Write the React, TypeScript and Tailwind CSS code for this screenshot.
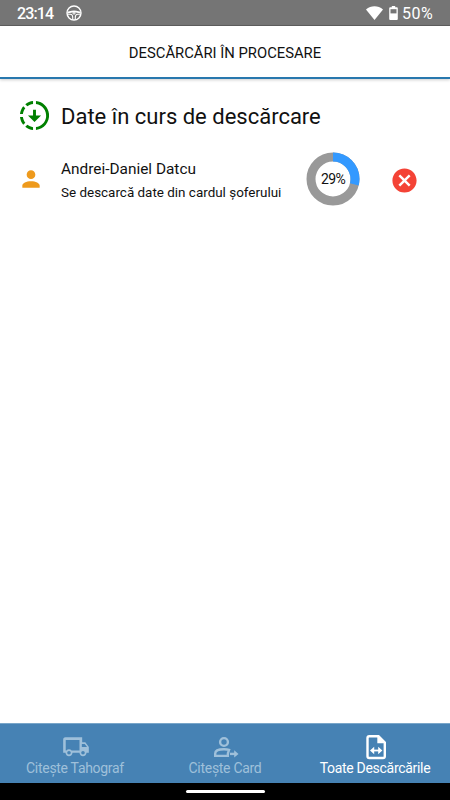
import type { ReactNode } from 'react';
import clsx from 'clsx';

function StatusBar() {
  return (
    <div className="flex h-[26px] shrink-0 items-center border-b border-[#5f5f5f] bg-[#757575] pr-[17px] pl-[17px] text-white">
      <span className="w-[49px] pt-[2px] font-['Roboto'] text-[16px] leading-none font-medium tracking-[-0.9px]">
        23:14
      </span>
      <svg width="16" height="16" viewBox="0 0 16 16" fill="none" stroke="currentColor">
        <circle cx="8" cy="8" r="7" strokeWidth="1.4" />
        <path d="M1.5 7.6C3.5 7.300 5 6.300 8 6.300S12.500 7.300 14.500 7.600" strokeWidth="1.8" />
        <circle cx="8" cy="8" r="1.500" fill="currentColor" stroke="none" />
        <path d="M1.600 9.300H4.300Q6.600 9.500 6.700 12V14.500M14.400 9.300H11.700Q9.400 9.500 9.300 12V14.500" strokeWidth="1.1" />
        <circle cx="8" cy="8" r="0.600" fill="#757575" stroke="none" />
      </svg>
      <div className="ml-auto flex items-center">
        <svg width="17" height="14" viewBox="0 0 17 14" fill="currentColor">
          <path d="M0 3.500C5-.8 12-.8 17 3.500L8.500 14z" />
        </svg>
        <svg className="ml-1.5" width="9" height="14" viewBox="0 0 9 14" fill="currentColor">
          <path d="M2.800 0h3.400v1.300h1.600q1 0 1 1V13q0 1-1 1H1.200q-1 0-1-1V2.300q0-1 1-1h1.600z" />
          <path d="M1.500 3.200h6v4.200h-6z" fill="#757575" />
        </svg>
        <span className="ml-[4px] pt-[2px] font-['Roboto'] text-[16px] leading-none tracking-[0.4px]">50%</span>
      </div>
    </div>
  );
}

function ProgressRing({ percent }: { percent: number }) {
  return (
    <div className="relative -mt-px flex h-[54px] w-[54px] items-center justify-center">
      <svg className="absolute inset-0 -rotate-90" width="54" height="54" viewBox="0 0 54 54" fill="none" strokeWidth="9">
        <circle cx="27" cy="27" r="22" stroke="#999999" />
        <circle cx="27" cy="27" r="22" stroke="#3399ff" pathLength="100" strokeDasharray={`${percent} 100`} />
      </svg>
      <span className="relative pt-px text-[14px] leading-none tracking-[-0.6px]">{percent}%</span>
    </div>
  );
}

function TruckIcon() {
  return (
    <svg className="ml-[2px]" width="28" height="28" viewBox="0 0 24 24" fill="currentColor">
      <path d="M18 18.500C18.830 18.500 19.500 17.830 19.500 17C19.500 16.170 18.830 15.500 18 15.500C17.170 15.500 16.500 16.170 16.500 17C16.500 17.830 17.170 18.500 18 18.500M19.500 9.500H17V12H21.460L19.500 9.500M6 18.500C6.830 18.500 7.500 17.830 7.500 17C7.500 16.170 6.830 15.500 6 15.500C5.170 15.500 4.500 16.170 4.500 17C4.500 17.830 5.170 18.500 6 18.500M20 8L23 12V17H21C21 18.660 19.660 20 18 20C16.340 20 15 18.660 15 17H9C9 18.660 7.660 20 6 20C4.340 20 3 18.660 3 17H1V6C1 4.500 1.500 3.700 3 3.700H17.300V8H20M3.200 5.900V15H3.760C4.310 14.390 5.110 14 6 14C6.890 14 7.690 14.390 8.240 15H15V5.900H3.200Z" />
    </svg>
  );
}

function DriverCardIcon() {
  return (
    <svg width="28" height="28" viewBox="0 0 28 28" fill="none" stroke="currentColor" strokeWidth="2.4">
      <circle cx="13" cy="9" r="3.900" />
      <path d="M16.800 22.900H4.200V20.500C4.200 17.500 8.500 16.300 13 16.300C15 16.300 16.800 16.500 18 16.900Q16.600 19.800 16.800 22.900z" />
      <path d="M19 20.900H24" />
      <path d="M23.200 17.200L27.500 20.900L23.200 24.600z" fill="currentColor" stroke="none" />
    </svg>
  );
}

function FileTransferIcon() {
  return (
    <svg className="ml-[2px]" width="28" height="28" viewBox="0 0 28 28" fill="none" stroke="currentColor" strokeWidth="2">
      <path d="M16.500 3.200H7.300Q5.500 3.200 5.500 5V23.200Q5.500 25 7.300 25H21Q22.800 25 22.800 23.200V9.500z" strokeWidth="2.400" />
      <path d="M15.300 2.500V10.200H23.500z" fill="currentColor" stroke="none" />
      <path d="M11 17.500H17.500" strokeWidth="1.800" />
      <path d="M12.200 13.700L8 17.500L12.200 21.300zM16.200 13.700L20.400 17.500L16.200 21.300z" fill="currentColor" stroke="none" />
    </svg>
  );
}

const tabs: { label: string; icon: ReactNode; active?: boolean }[] = [
  { label: 'Citește Tahograf', icon: <TruckIcon /> },
  { label: 'Citește Card', icon: <DriverCardIcon /> },
  { label: 'Toate Descărcările', icon: <FileTransferIcon />, active: true },
];

export default function App() {
  return (
    <div className="flex h-screen flex-col bg-white font-['Roboto',sans-serif] text-[#111111]">
      <StatusBar />

      <header className="flex h-[53px] shrink-0 items-center justify-center border-b-2 border-[#2878ae] pt-[3px] shadow-[0_1px_3px_rgba(0,0,0,0.2)]">
        <h1 className="text-[14.8px] leading-none">DESCĂRCĂRI ÎN PROCESARE</h1>
      </header>

      <main className="flex-1">
        <div className="flex h-[73px] items-center pl-[17px]">
          <svg width="35" height="35" viewBox="0 0 24 24" fill="#008000">
            <path d="M13 2.03V2.05L13 4.05C17.39 4.59 20.5 8.58 19.96 12.97C19.5 16.61 16.64 19.5 13 19.93V21.93C18.5 21.38 22.5 16.5 21.95 11C21.5 6.25 17.73 2.5 13 2.03M11 2.06C9.05 2.25 7.19 3 5.67 4.26L7.1 5.74C8.22 4.84 9.57 4.26 11 4.06V2.06M4.26 5.67C3 7.19 2.25 9.04 2.05 11H4.05C4.24 9.58 4.8 8.23 5.69 7.1L4.26 5.67M2.06 13C2.26 14.96 3.03 16.81 4.27 18.33L5.69 16.9C4.81 15.77 4.24 14.42 4.06 13H2.06M7.1 18.37L5.67 19.74C7.18 21 9.04 21.79 11 22V20C9.58 19.82 8.23 19.25 7.1 18.37M12 16.5L7.5 12H11V8H13V12H16.5L12 16.5Z" />
          </svg>
          <h2 className="ml-[9px] pt-[3px] text-[22px] leading-none">Date în curs de descărcare</h2>
        </div>

        <div className="flex h-[54px] items-center">
          <svg className="ml-[18px]" width="26" height="26" viewBox="0 0 24 24" fill="#ee9a1c">
            <path d="M12 4a4 4 0 1 1 0 8 4 4 0 0 1 0-8m0 10c4.420 0 8 1.790 8 4v2H4v-2c0-2.210 3.580-4 8-4" />
          </svg>
          <div className="mt-[3px] ml-[17px] w-[245px]">
            <p className="text-[15.4px] leading-6">Andrei-Daniel Datcu</p>
            <p className="text-[13.45px] leading-6">Se descarcă date din cardul șoferului</p>
          </div>
          <ProgressRing percent={29} />
          <button className="mt-[2px] ml-[30px]" aria-label="Anulează">
            <svg width="29" height="29" viewBox="0 0 24 24" fill="#f44336">
              <path d="M12,2C17.53,2 22,6.47 22,12C22,17.53 17.53,22 12,22C6.47,22 2,17.53 2,12C2,6.47 6.47,2 12,2M15.59,7L12,10.59L8.41,7L7,8.41L10.59,12L7,15.59L8.41,17L12,13.41L15.59,17L17,15.59L13.41,12L17,8.41L15.59,7Z" />
            </svg>
          </button>
        </div>
      </main>

      <nav className="grid h-[60px] shrink-0 grid-cols-3 border-t border-[#79a6c9] bg-[#4682b4]">
        {tabs.map((tab) => (
          <div
            key={tab.label}
            className={clsx(
              'flex flex-col items-center pt-[9px] text-[14px] leading-4',
              tab.active ? 'text-white' : 'text-[#9fc0da]',
            )}
          >
            {tab.icon}
            <span className="-mt-px tracking-[-0.3px] whitespace-nowrap">{tab.label}</span>
          </div>
        ))}
      </nav>

      <div className="flex h-[17px] shrink-0 justify-center bg-black pt-[7px]">
        <div className="h-[3px] w-[79px] rounded-full bg-white" />
      </div>
    </div>
  );
}
